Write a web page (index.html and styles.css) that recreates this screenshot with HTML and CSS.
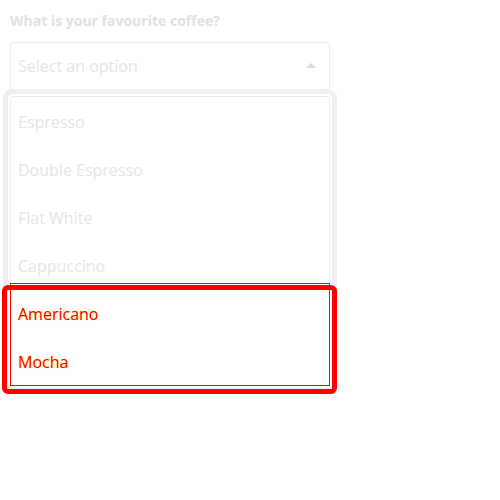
FILE: index.html
```html
<!DOCTYPE html>
<html>
<head>
<meta charset="utf-8">
<link rel="stylesheet" href="styles.css">
</head>
<body>
<div class="field">
  <div class="label">What is your favourite coffee?</div>
  <div class="select">
    <span class="placeholder">Select an option</span>
    <span class="caret"></span>
  </div>
  <ul class="listbox">
    <li class="option">Espresso</li>
    <li class="option">Double Espresso</li>
    <li class="option">Flat White</li>
    <li class="option">Cappuccino</li>
    <li class="option hl">Americano</li>
    <li class="option hl">Mocha</li>
  </ul>
  <div class="hl-thin"></div>
  <div class="hl-ring"></div>
</div>
</body>
</html>
```
FILE: styles.css
```css
html, body {
  margin: 0;
  padding: 0;
  background: #fff;
}
.field {
  position: relative;
  padding: 10px;
  width: 320px;
  font-family: "Open Sans", "Liberation Sans", sans-serif;
}
.label {
  font-size: 14px;
  font-weight: 700;
  line-height: 22px;
  color: #e2e2e2;
  margin-bottom: 10px;
}
.select {
  box-sizing: border-box;
  height: 48px;
  border: 1px solid #ececec;
  border-radius: 3px;
  display: flex;
  align-items: center;
  justify-content: space-between;
  padding: 0 13px 0 7px;
}
.placeholder {
  font-size: 16px;
  color: #e6e6e6;
}
.caret {
  width: 0;
  height: 0;
  border-left: 5px solid transparent;
  border-right: 5px solid transparent;
  border-bottom: 5px solid #dcdcdc;
  margin-top: -2px;
}
.listbox {
  list-style: none;
  margin: 6px 0 0 0;
  padding: 0;
  background: #fff;
  border: 1px solid #ececec;
  border-radius: 3px;
  box-shadow: 0 0 0 2px #fff, 0 0 0 7px #f0f0f0;
}
.option {
  box-sizing: border-box;
  height: 48px;
  line-height: 46px;
  padding: 2px 0 0 7px;
  font-size: 16px;
  color: #e6e6e6;
}
.option.hl {
  color: #ff0000;
  text-shadow: 0 0 1px #ffee00;
}
.hl-thin {
  position: absolute;
  left: 10px;
  top: 283px;
  width: 318px;
  height: 101px;
  border: 1px solid #ff0000;
}
.hl-ring {
  position: absolute;
  left: 2px;
  top: 285px;
  width: 325px;
  height: 99px;
  border: 5px solid #ff0000;
  border-radius: 6px;
}
```
